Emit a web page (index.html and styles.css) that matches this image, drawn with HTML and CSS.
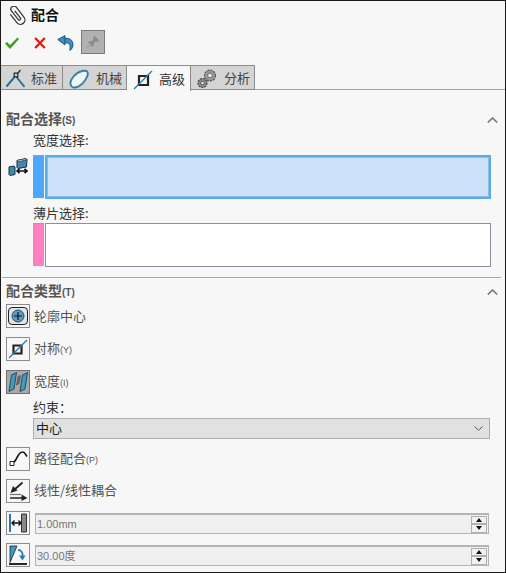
FILE: index.html
```html
<!DOCTYPE html>
<html lang="zh">
<head>
<meta charset="utf-8">
<title>配合</title>
<link rel="stylesheet" href="styles.css">
</head>
<body>
<main class="panel">
  <header class="title-row">
    <svg class="clip" viewBox="0 0 18 20"><g transform="translate(9 9.500) rotate(-38) translate(-7 -11)"><path d="M2.500 6V16.500a4.500 4.500 0 0 0 9 0V4a3 3 0 0 0-6 0V15a1.300 1.300 0 0 0 2.600 0V6" fill="none" stroke="#3a3a3a" stroke-width="1.300"/></g></svg>
    <span class="title">配合</span>
  </header>
  <div class="toolbar">
    <svg class="tool-ok" viewBox="0 0 14 12"><path d="M0 6.500 2 5 5 8 12.500 .5 14 2 5 12Z" fill="#3f9a14"/></svg>
    <svg class="tool-x" viewBox="0 0 12 12"><path d="M1.200 1 10.800 11M10.800 1 1.200 11" fill="none" stroke="#e0200c" stroke-width="2.400"/></svg>
    <svg class="tool-undo" viewBox="0 0 17 16"><path d="M7 3.500c5-1 9 1.500 9 6 0 2.500-1 4.300-3 6-.2-2 .3-3.500 0-5.500C12.600 8 10 7.500 7 8Z" fill="#3d8fc4" stroke="#17496b" stroke-width=".9"/><path d="M.8 4.500 8 .6V10Z" fill="#3d8fc4" stroke="#17496b" stroke-width=".9"/></svg>
    <button class="pin" type="button"><svg viewBox="0 0 14 14"><path d="M8.500 1 13 5.500 11.500 6.500 9.500 6 7.500 8.500 7.500 10.500 6.500 11.500 2.800 7.500 3.800 6.500 5.800 6.500 8 4.500 7.600 2.500ZM4.500 9.500 1 13" fill="#8d8d8d" stroke="#8d8d8d" stroke-width=".8"/></svg></button>
  </div>
  <nav class="tabs">
    <div class="tab tab-a">
      <svg class="tab-icon" viewBox="0 0 20 20"><path d="M1.500 17.500 9.500 8M11.500 8 19.500 18" fill="none" stroke="#2b6f9a" stroke-width="2"/><path d="M9.200 4.200h3.600v3.600H9.200zM13 4 15.500 1" fill="none" stroke="#222" stroke-width="1.200"/></svg>
      <span>标准</span>
    </div>
    <div class="tab tab-b">
      <svg class="tab-icon" viewBox="0 0 20 20"><path d="M4.500 18.500C1.500 18 .5 14 2.500 10.500 5 6 10 2.500 14.500 1.800 18 1.300 19.500 3 18.500 6.500 17 11.500 11 19 4.500 18.500Z" fill="#f0f4f6" stroke="#3a7ea8" stroke-width="1.900"/></svg>
      <span>机械</span>
    </div>
    <div class="tab tab-c active">
      <svg class="tab-icon" viewBox="0 0 20 20"><path d="M6 6h9v9H6z" fill="none" stroke="#222" stroke-width="2.200"/><path d="M1 19 19 1" stroke="#2b79ab" stroke-width="1.200"/></svg>
      <span>高级</span>
    </div>
    <div class="tab tab-d">
      <svg class="tab-icon" viewBox="0 0 20 20"><circle cx="13" cy="6.500" r="5.500" fill="#9a9a9a" stroke="#555" stroke-width="1.200" stroke-dasharray="2.200 1"/><circle cx="13" cy="6.500" r="2.400" fill="#e6e6e6" stroke="#555" stroke-width=".8"/><circle cx="5.500" cy="14" r="4.500" fill="#8c8c8c" stroke="#444" stroke-width="1.200" stroke-dasharray="2 1"/><circle cx="5.500" cy="14" r="1.800" fill="#e6e6e6" stroke="#444" stroke-width=".8"/></svg>
      <span>分析</span>
    </div>
  </nav>

  <section class="section-select">
    <div class="section-head"><h2>配合选择<small>(S)</small></h2><svg class="chev" viewBox="0 0 11 6"><path d="M.8 5.500 5.500 1l4.700 4.500" fill="none" stroke="#7a7a7a" stroke-width="1.700"/></svg></div>
    <div class="field-label label-width">宽度选择:</div>
    <div class="pick-row">
      <svg class="pick-icon" viewBox="0 0 20 20"><path d="M9 3.500 18 1.500l1 1-.5 7.500-8.500 1.500-1-1Z" fill="#3f88b4" stroke="#1d2d3a"/><path d="M9 3.500l9-2 1 1-9 2.500Z" fill="#e8f0f4" stroke="#1d2d3a" stroke-width=".7"/><path d="M1 10l5-1 1 1v7.500l-5 1-1-1Z" fill="#3f88b4" stroke="#1d2d3a"/><path d="M9 14h10M11.500 11.800 9 14l2.500 2.200M16.500 11.800 19 14l-2.500 2.200" fill="none" stroke="#111" stroke-width="1.600"/></svg>
      <div class="stripe stripe-blue"></div>
      <div class="list list-active"></div>
    </div>
    <div class="field-label label-sheet">薄片选择:</div>
    <div class="pick-row pick-row-sheet">
      <div class="pick-spacer"></div>
      <div class="stripe stripe-pink"></div>
      <div class="list"></div>
    </div>
  </section>

  <section class="section-type">
    <div class="section-head"><h2>配合类型<small>(T)</small></h2><svg class="chev" viewBox="0 0 11 6"><path d="M.8 5.500 5.500 1l4.700 4.500" fill="none" stroke="#7a7a7a" stroke-width="1.700"/></svg></div>
    <div class="opt opt-1">
      <div class="icon-btn"><svg viewBox="0 0 20 20"><rect x=".5" y="1.500" width="19" height="17" rx="3.500" fill="#e4e4e4" stroke="#222"/><circle cx="10" cy="10" r="6" fill="#5c9cc4" stroke="#1e4d6e"/><path d="M6 10h8M10 6v8" stroke="#111" stroke-width="1.200"/></svg></div>
      <span>轮廓中心</span>
    </div>
    <div class="opt opt-2">
      <div class="icon-btn"><svg viewBox="0 0 20 20"><path d="M5.500 6.500h8v8h-8z" fill="none" stroke="#222" stroke-width="2.200"/><path d="M1 19 19 1" stroke="#2b79ab" stroke-width="1.200"/></svg></div>
      <span>对称<small>(Y)</small></span>
    </div>
    <div class="opt opt-3">
      <div class="icon-btn on"><svg viewBox="0 0 20 20"><path d="M1 19.500 3.500 3 8.500 .5 6 17Z" fill="#3f9ac4" stroke="#123" stroke-width=".7"/><path d="M8.500 13 10 5 12.500 3.500 11 11.500Z" fill="#707070" stroke="#333" stroke-width=".5"/><path d="M12 19.500 14.500 3 19.500 .5 17 17Z" fill="#3f9ac4" stroke="#123" stroke-width=".7"/></svg></div>
      <span>宽度<small>(I)</small></span>
    </div>
    <div class="constraint">
      <div class="field-label label-constraint">约束：</div>
      <div class="select"><span>中心</span><svg viewBox="0 0 9 5"><path d="M.5.500 4.500 4.300 8.500.500" fill="none" stroke="#555"/></svg></div>
    </div>
    <div class="opt opt-4">
      <div class="icon-btn"><svg viewBox="0 0 20 20"><path d="M4 14C9 14 9 3 14.500 3 17 3 17.500 5.500 19 7.500" fill="none" stroke="#111" stroke-width="1.700"/><path d="M2 12.500h4v4H2z" fill="#fff" stroke="#222"/></svg></div>
      <span>路径配合<small>(P)</small></span>
    </div>
    <div class="opt opt-5">
      <div class="icon-btn"><svg viewBox="0 0 20 20"><path d="M6 9 14.500 1.500" stroke="#222" stroke-width="1.800"/><path d="M2.500 12 5 5 9.500 9.500Z" fill="#222"/><path d="M2 13.500h11" stroke="#777" stroke-width="1.200"/><path d="M2 17h13" stroke="#222" stroke-width="1.500"/><path d="M13.500 13.500 19.500 17 13.500 20Z" fill="#222"/></svg></div>
      <span class="opt-text-up">线性/线性耦合</span>
    </div>
    <div class="opt opt-num">
      <div class="icon-btn"><svg viewBox="0 0 20 20"><path d="M2 1v18" stroke="#2b79ab" stroke-width="2"/><path d="M13.500 1h5v18h-5z" fill="#888" stroke="#333"/><path d="M4 10h9M6.500 7.500 4 10l2.500 2.500M10.500 7.500 13 10l-2.500 2.500" fill="none" stroke="#111" stroke-width="1.400"/></svg></div>
      <div class="num"><span>1.00mm</span><div class="spin"><i class="up"></i><i class="down"></i></div></div>
    </div>
    <div class="opt opt-num">
      <div class="icon-btn"><svg viewBox="0 0 20 20"><path d="M2 17.500V1h7L2 17.500Z" fill="#3f9ac4" stroke="#123" stroke-width=".8"/><path d="M1 19h18" stroke="#111" stroke-width="1.800"/><path d="M10 5c3.500 0 5 3 4.500 6" fill="none" stroke="#2b79ab" stroke-width="1.800"/><path d="M11 10.500h6.500L14.500 15.500Z" fill="#2b79ab"/></svg></div>
      <div class="num"><span>30.00度</span><div class="spin"><i class="up"></i><i class="down"></i></div></div>
    </div>
  </section>
</main>
</body>
</html>
```
FILE: styles.css
```css
* { box-sizing: border-box; }
html, body { margin: 0; padding: 0; }
body { width: 506px; height: 573px; overflow: hidden; background: #f7f7f7; font-family: "Noto Sans CJK SC", "Noto Sans", sans-serif; }

.panel {
  width: 506px; height: 573px;
  background: #f7f7f7;
  border: 1px solid #1a1a1a;
  font-size: 13px; line-height: 16px; color: #333;
}

.title-row { height: 29px; display: flex; align-items: center; padding-left: 7px; gap: 5px; }
.clip { width: 18px; height: 20px; }
.title { font-weight: 700; color: #111; font-size: 14px; padding-bottom: 3px; }

.toolbar { height: 25px; display: flex; align-items: center; }
.tool-ok { width: 14px; height: 12px; margin-left: 4px; }
.tool-x { width: 12px; height: 12px; margin-left: 15px; }
.tool-undo { width: 17px; height: 16px; margin-left: 11px; }
.pin { width: 24px; height: 24px; align-self: flex-start; margin: 0 0 0 7px; padding: 0; background: #b1b1b1; border: 1px solid #7a7a7a; display: flex; align-items: center; justify-content: center; }
.pin svg { width: 14px; height: 14px; }

.tabs { height: 35px; display: flex; align-items: flex-start; padding-top: 10px; border-bottom: 1px solid #a6a6a6; }
.tab { height: 25px; display: flex; align-items: center; gap: 7px; padding-left: 6px; background: #d4d4d4; border: 1px solid #8c8c8c; border-left: 0; color: #444; font-size: 13px; }
.tab-icon { width: 20px; height: 20px; flex: none; margin-top: 2px; }
.tab-a { width: 62px; padding-left: 4px; gap: 6px; }
.tab-b { width: 64px; }
.tab-c { width: 64px; }
.tab-d { width: 64px; }
.tab.active { background: #f7f7f7; border-bottom: 0; height: 26px; padding-left: 6px; color: #333; gap: 6px; margin-bottom: -1px; position: relative; }

.section-select { padding-top: 21px; }
.section-head { height: 16px; display: flex; align-items: center; justify-content: space-between; padding: 0 7px 0 5px; }
.section-head h2 { margin: 0; font-size: 14px; font-weight: 700; color: #555; line-height: 16px; }
.section-head small { font-family: "Liberation Sans", sans-serif; font-size: 10px; font-weight: 700; }
.chev { width: 11px; height: 6px; margin-top: 2px; }

.field-label { margin-left: 32px; height: 16px; font-size: 13px; color: #333; }
.label-width { margin-top: 5px; }
.label-sheet { margin-top: 5px; }

.pick-row { display: flex; align-items: flex-start; height: 45px; margin-top: 7px; }
.pick-row-sheet { margin-top: 2px; }
.pick-icon { width: 20px; height: 20px; margin: 2px 5px 0 7px; flex: none; }
.pick-spacer { width: 32px; flex: none; }
.stripe { width: 11px; height: 43px; margin-right: 1px; border-top: 1px solid #a0a0a0; flex: none; }
.stripe-blue { background: #4fa6ff; }
.stripe-pink { background: #ff80c0; }
.list { width: 446px; height: 44px; background: #fff; border: 1px solid #8a90a4; flex: none; }
.list-active { background: #cde2f8; border: 2px solid #58aee4; box-shadow: inset 0 0 0 1px #90bce8; }

.section-type { margin: 9px 0 0 1px; border-top: 1px solid #a8a8a8; width: 499px; padding-top: 5px; }
.section-type .section-head { padding: 0 3px 0 4px; }
.section-type .field-label { margin-left: 31px; }

.opt { display: flex; align-items: center; gap: 4px; height: 24px; margin-left: 4px; color: #555; font-size: 13px; }
.opt small { font-family: "Liberation Sans", sans-serif; font-size: 9px; }
.opt-text-up { padding-bottom: 2px; }
.opt-1 { margin-top: 5px; }
.opt-2 { margin-top: 9px; }
.opt-3 { margin-top: 9px; }
.opt-4 { margin-top: 8px; }
.opt-5 { margin-top: 8px; }
.opt-num { margin-top: 8px; gap: 5px; align-items: flex-start; }
.icon-btn { width: 24px; height: 24px; border: 1px solid #8c8c8c; background: #f7f7f7; display: flex; align-items: center; justify-content: center; flex: none; }
.icon-btn svg { width: 20px; height: 20px; }
.icon-btn.on { background: #a8a8a8; border-color: #707070; }

.constraint { margin-top: 6px; }
.label-constraint { height: 16px; line-height: 14px; }
.select { margin: 2px 0 0 31px; width: 457px; height: 21px; background: #e1e1e1; border: 1px solid #adadad; display: flex; align-items: center; justify-content: space-between; padding: 0 6px 2px 2px; color: #222; font-size: 13px; }
.select svg { width: 9px; height: 5px; margin-top: 2px; }

.num { width: 454px; height: 21px; margin-top: 2px; background: #f0f0f0; border: 1px solid #b4b4b4; border-top-width: 2px; display: flex; align-items: center; justify-content: space-between; color: #777; font-family: "Liberation Sans", "Noto Sans CJK SC", sans-serif; font-size: 11px; padding-left: 1px; }
.num span { padding-bottom: 1px; }
.spin { width: 16px; height: 17px; display: flex; flex-direction: column; margin-right: 1px; background: #b0b0b0; gap: 2px; border: 1px solid #b0b0b0; }
.spin i { flex: 1; background: #f2f2f2; display: flex; align-items: center; justify-content: center; }
.spin i::before { content: ""; border-left: 3.500px solid transparent; border-right: 3.500px solid transparent; }
.spin .up::before { border-bottom: 4px solid #111; }
.spin .down::before { border-top: 4px solid #111; }
```
